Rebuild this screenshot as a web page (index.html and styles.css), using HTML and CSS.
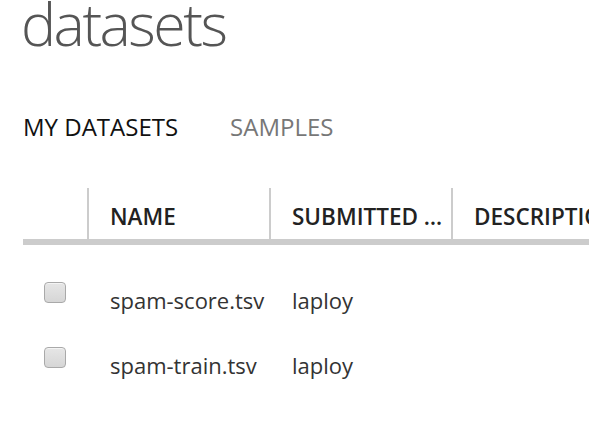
FILE: index.html
```html
<!DOCTYPE html>
<html>
<head>
<meta charset="utf-8">
<link rel="stylesheet" href="styles.css">
</head>
<body>
<div class="page">
  <h1 class="title">datasets</h1>
  <div class="tabs">
    <span class="tab active">MY DATASETS</span>
    <span class="tab">SAMPLES</span>
  </div>
  <div class="table">
    <div class="row head">
      <div class="cell check"></div>
      <div class="cell hcell">NAME</div>
      <div class="cell hcell">SUBMITTED …</div>
      <div class="cell hcell">DESCRIPTION</div>
    </div>
    <div class="row body">
      <div class="cell check"><span class="box"></span></div>
      <div class="cell">spam-score.tsv</div>
      <div class="cell">laploy</div>
      <div class="cell"></div>
    </div>
    <div class="row body">
      <div class="cell check"><span class="box"></span></div>
      <div class="cell">spam-train.tsv</div>
      <div class="cell">laploy</div>
      <div class="cell"></div>
    </div>
  </div>
</div>
</body>
</html>
```
FILE: styles.css
```css
html, body {
  margin: 0;
  padding: 0;
  background: #fff;
  overflow: hidden;
}
body {
  width: 589px;
  height: 436px;
  font-family: "Open Sans", "Noto Sans", sans-serif;
}
.page {
  padding-left: 23px;
}
.title {
  margin: -10px 0 0 -2px;
  font-size: 59px;
  font-weight: 300;
  line-height: 66px;
  color: #555;
  letter-spacing: -2.5px;
}
.tabs {
  display: flex;
  gap: 52px;
  margin-top: 56px;
  font-size: 24px;
  line-height: 30px;
}
.tab {
  color: #777;
}
.tab.active {
  color: #111;
}
.table {
  margin-top: 46px;
  width: 700px;
}
.row {
  display: grid;
  grid-template-columns: 64px 182px 182px 1fr;
}
.row.head {
  height: 51px;
  border-bottom: 6px solid #ccc;
}
.hcell {
  border-left: 2px solid #ccc;
  padding-left: 21px;
  font-size: 22.5px;
  font-weight: 600;
  color: #222;
  display: flex;
  align-items: flex-end;
  padding-bottom: 7px;
  white-space: nowrap;
  overflow: hidden;
}
.row.body {
  height: 65px;
  font-size: 22px;
  color: #333;
}
.row.body .cell {
  padding-left: 23px;
  padding-top: 30px;
  line-height: 30px;
}
.row.body .cell.check {
  padding-left: 21px;
  padding-top: 27px;
}
.box {
  display: block;
  width: 20px;
  height: 19px;
  border: 1px solid #a9a9a9;
  border-radius: 4px;
  background: linear-gradient(#e6e6e6, #d6d6d6);
  box-shadow: inset 0 1px 0 #f4f4f4;
}
.table .row.head + .row.body {
  margin-top: 10px;
}
```
